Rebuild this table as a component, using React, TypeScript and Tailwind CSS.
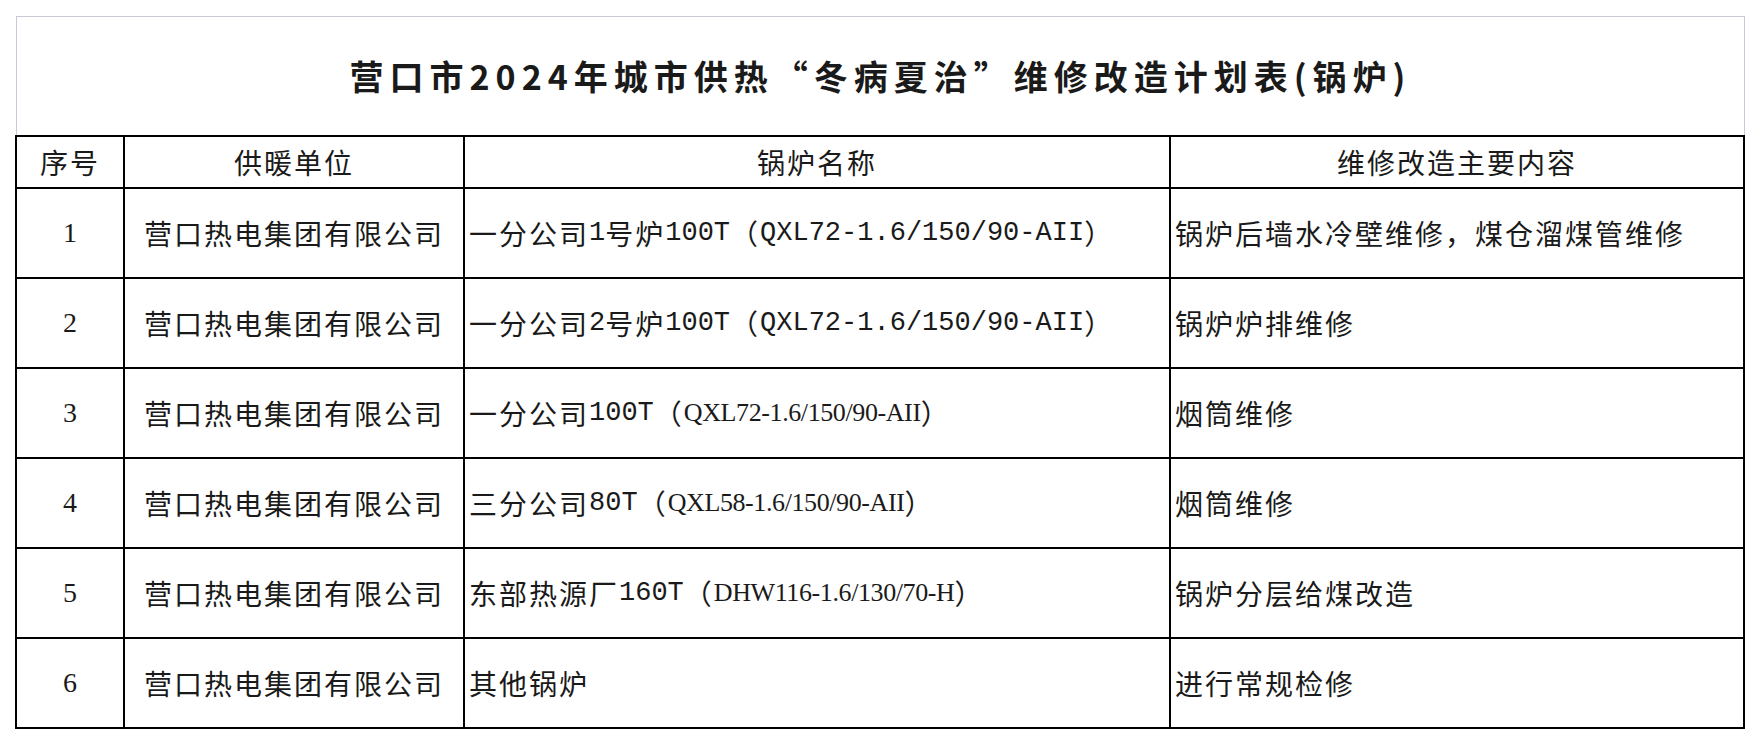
import React from 'react';

type Seg = { t: string; k: 'cjk' | 'mono' | 'serif' };

const cjk = "font-['Noto_Sans_CJK_SC',sans-serif] text-[28px] tracking-[2px]";
const mono = "font-['Liberation_Mono',monospace] text-[27px]";
const serif = "font-['Liberation_Serif','Noto_Sans_CJK_SC',serif] text-[26px] tracking-[-0.4px]";

const segClass = (k: Seg['k']) => (k === 'cjk' ? cjk : k === 'mono' ? mono : serif);

const rows: { no: string; unit: string; boiler: Seg[]; work: string }[] = [
  {
    no: '1',
    unit: '营口热电集团有限公司',
    boiler: [
      { t: '一分公司', k: 'cjk' },
      { t: '1', k: 'mono' },
      { t: '号炉', k: 'cjk' },
      { t: '100T', k: 'mono' },
      { t: '（', k: 'cjk' },
      { t: 'QXL72-1.6/150/90-AII', k: 'mono' },
      { t: '）', k: 'cjk' },
    ],
    work: '锅炉后墙水冷壁维修，煤仓溜煤管维修',
  },
  {
    no: '2',
    unit: '营口热电集团有限公司',
    boiler: [
      { t: '一分公司', k: 'cjk' },
      { t: '2', k: 'mono' },
      { t: '号炉', k: 'cjk' },
      { t: '100T', k: 'mono' },
      { t: '（', k: 'cjk' },
      { t: 'QXL72-1.6/150/90-AII', k: 'mono' },
      { t: '）', k: 'cjk' },
    ],
    work: '锅炉炉排维修',
  },
  {
    no: '3',
    unit: '营口热电集团有限公司',
    boiler: [
      { t: '一分公司', k: 'cjk' },
      { t: '100T', k: 'mono' },
      { t: '（', k: 'cjk' },
      { t: 'QXL72-1.6/150/90-AII', k: 'serif' },
      { t: '）', k: 'cjk' },
    ],
    work: '烟筒维修',
  },
  {
    no: '4',
    unit: '营口热电集团有限公司',
    boiler: [
      { t: '三分公司', k: 'cjk' },
      { t: '80T', k: 'mono' },
      { t: '（', k: 'cjk' },
      { t: 'QXL58-1.6/150/90-AII', k: 'serif' },
      { t: '）', k: 'cjk' },
    ],
    work: '烟筒维修',
  },
  {
    no: '5',
    unit: '营口热电集团有限公司',
    boiler: [
      { t: '东部热源厂', k: 'cjk' },
      { t: '160T', k: 'mono' },
      { t: '（', k: 'cjk' },
      { t: 'DHW116-1.6/130/70-H', k: 'serif' },
      { t: '）', k: 'cjk' },
    ],
    work: '锅炉分层给煤改造',
  },
  {
    no: '6',
    unit: '营口热电集团有限公司',
    boiler: [{ t: '其他锅炉', k: 'cjk' }],
    work: '进行常规检修',
  },
];

const cell = 'border-r-2 border-b-2 border-black flex items-center leading-none whitespace-nowrap';

const App: React.FC = () => {
  return (
    <div className="w-[1760px] h-[744px] bg-white text-[#1a1a1a] overflow-hidden">
      {/* Title box */}
      <div className="mt-[16px] ml-[16px] w-[1729px] h-[119px] border border-b-0 border-[#c8c8d8] flex items-center justify-center">
        <h1 className="font-['Noto_Sans_CJK_SC',sans-serif] font-bold text-[34px] tracking-[6px] leading-none">
          营口市2024年城市供热“冬病夏治”维修改造计划表(锅炉)
        </h1>
      </div>

      {/* Table */}
      <div className="ml-[15px] w-[1730px] border-t-2 border-l-2 border-black grid grid-cols-[108px_340px_706px_574px] grid-rows-[52px_repeat(6,90px)]">
        <div className={`${cell} justify-center ${cjk}`}>序号</div>
        <div className={`${cell} justify-center ${cjk}`}>供暖单位</div>
        <div className={`${cell} justify-center ${cjk}`}>锅炉名称</div>
        <div className={`${cell} justify-center ${cjk}`}>维修改造主要内容</div>

        {rows.map((r) => (
          <React.Fragment key={r.no}>
            <div className={`${cell} justify-center font-['Liberation_Serif',serif] text-[28px]`}>{r.no}</div>
            <div className={`${cell} justify-center ${cjk}`}>{r.unit}</div>
            <div className={`${cell} pl-[4px]`}>
              {r.boiler.map((s, i) => (
                <span key={i} className={segClass(s.k)}>
                  {s.t}
                </span>
              ))}
            </div>
            <div className={`${cell} pl-[4px] ${cjk}`}>{r.work}</div>
          </React.Fragment>
        ))}
      </div>
    </div>
  );
};

export default App;
